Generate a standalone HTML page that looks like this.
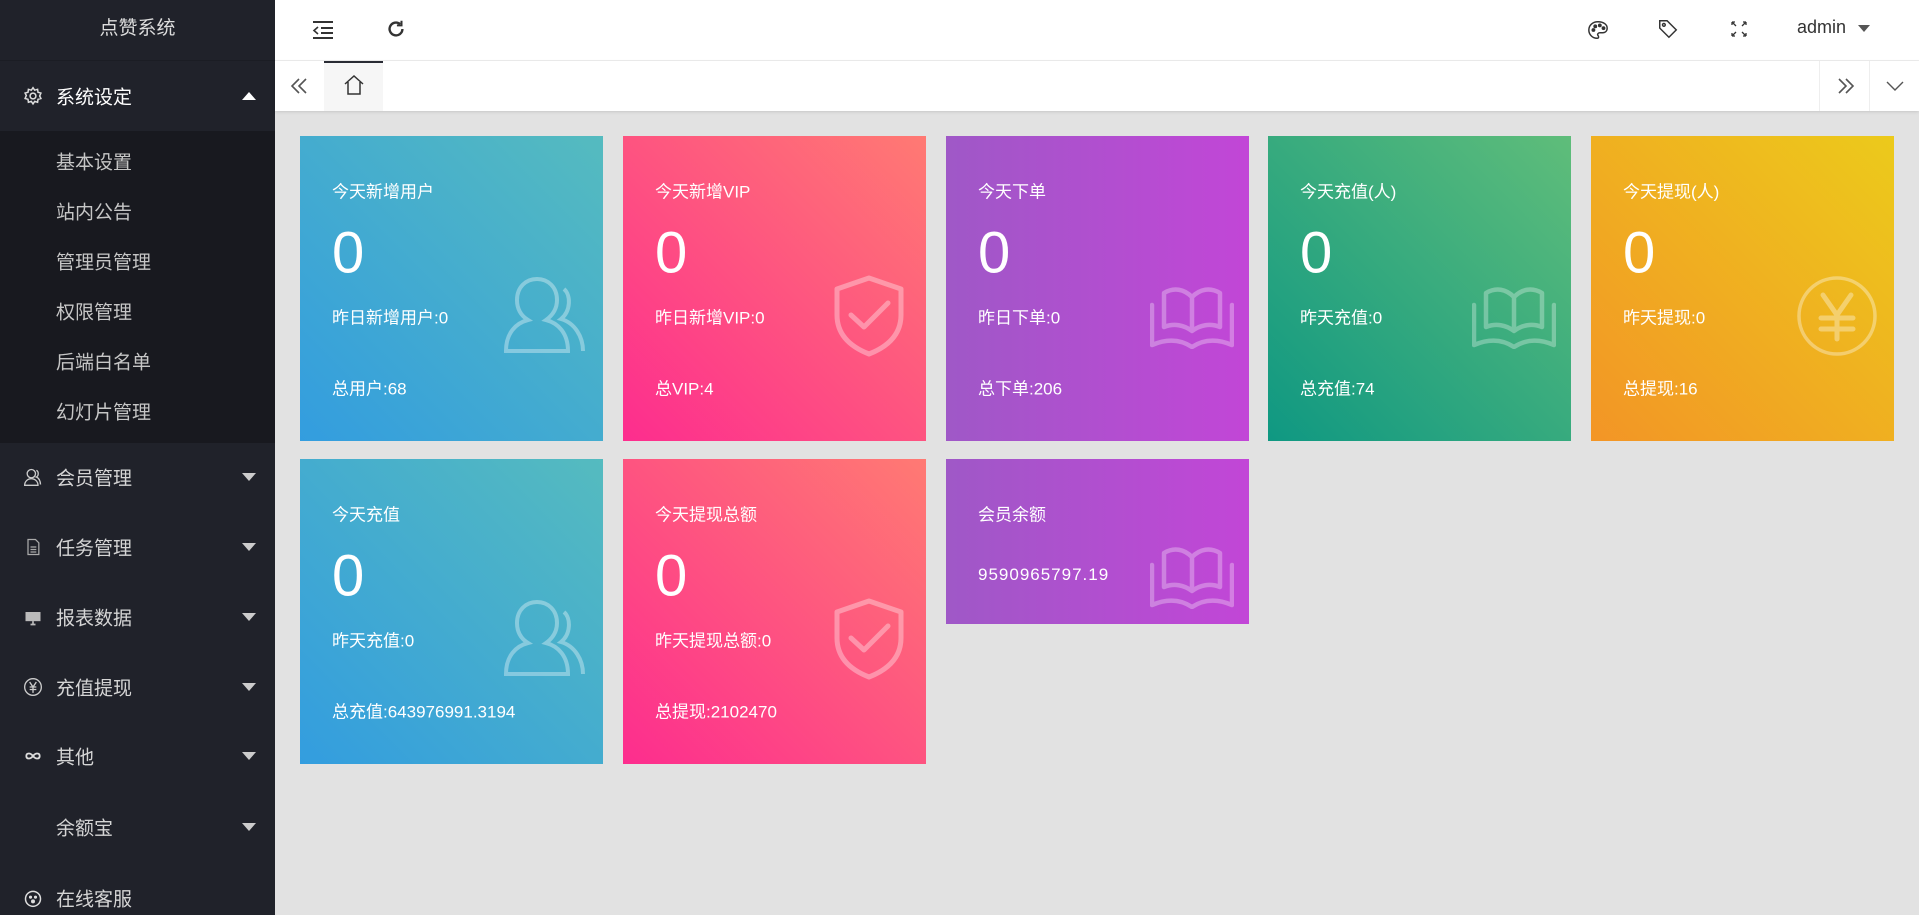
<!DOCTYPE html>
<html><head><meta charset="utf-8"><style>
*{margin:0;padding:0;box-sizing:border-box}
body{width:1919px;height:915px;overflow:hidden;background:#e2e2e2;font-family:"Liberation Sans","Noto Sans CJK SC",sans-serif;position:relative}
.side{position:absolute;left:0;top:0;width:275px;height:915px;background:#20222a;color:#c9c9c9}
.logo{height:61px;line-height:58px;text-align:center;font-size:19px;color:#ddd;border-bottom:1px solid #1b1d24}
.mi{position:absolute;left:0;width:275px;font-size:19px;color:#d5d5d5}
.mi .t{position:absolute;left:56px;transform:translateY(-50%)}
.mi .ic{position:absolute;left:23px;transform:translateY(-50%);width:20px;height:20px}
.mi .ar{position:absolute;left:242px;transform:translateY(-50%);width:0;height:0;border-left:7px solid transparent;border-right:7px solid transparent;border-top:8px solid #ccc}
.sub{position:absolute;left:0;top:131px;width:275px;height:312px;background:#18191f}
.sub div{position:absolute;left:56px;font-size:19px;color:#c6c6c6;transform:translateY(-50%)}
.top{position:absolute;left:275px;top:0;right:0;height:61px;background:#fff;border-bottom:1px solid #eee}
.tabs{position:absolute;left:275px;top:61px;right:0;height:50px;background:#fff;box-shadow:0 1px 3px rgba(0,0,0,.12)}
.card{position:absolute;width:303px;color:#fff;overflow:hidden}
.card .a{position:absolute;left:32px;transform:translateY(-50%);white-space:nowrap}
.h{font-size:17px}.n{font-size:58px}.s{font-size:17px}
.card svg.big{position:absolute}
</style></head><body>
<div class="side">
<div class="logo">点赞系统</div>
<div class="mi" style="top:96px"><svg class="ic" viewBox="0 0 24 24" fill="none" stroke="#ddd" stroke-width="1.8"><circle cx="12" cy="12" r="3.5"/><path d="M12 2l2 3 3.5-1 .5 3.5 3.5 1-1.5 3.5 1.5 3-3.5 1-.5 3.5-3.5-1-2 3-2-3-3.5 1-.5-3.5-3.5-1 1.5-3.5-1.5-3 3.5-1 .5-3.5 3.5 1z"/></svg><span class="t" style="color:#fff">系统设定</span><span class="ar" style="border-top:0;border-bottom:8px solid #fff"></span></div>
<div class="sub">
<div style="top:30px">基本设置</div><div style="top:80px">站内公告</div><div style="top:130px">管理员管理</div><div style="top:180px">权限管理</div><div style="top:230px">后端白名单</div><div style="top:280px">幻灯片管理</div>
</div>
<div class="mi" style="top:477px"><svg class="ic" viewBox="0 0 24 24" fill="none" stroke="#ccc" stroke-width="1.6"><circle cx="10" cy="8" r="5"/><path d="M2 22c0-5 4-8 8-8s8 3 8 8z M16 4c3 1 3 7 0 8 3 1 5 5 5 9"/></svg><span class="t">会员管理</span><span class="ar"></span></div>
<div class="mi" style="top:547px"><svg class="ic" viewBox="0 0 24 24" fill="none" stroke="#aaa" stroke-width="1.5"><path d="M6 3h9l4 4v14H6z M9 12h7M9 15h7M9 18h7"/></svg><span class="t">任务管理</span><span class="ar"></span></div>
<div class="mi" style="top:617px"><svg class="ic" viewBox="0 0 24 24"><rect x="3" y="6" width="18" height="11" fill="#bbb"/><path d="M12 17v4M9 21h6" stroke="#bbb" stroke-width="2"/></svg><span class="t">报表数据</span><span class="ar"></span></div>
<div class="mi" style="top:687px"><svg class="ic" viewBox="0 0 24 24" fill="none" stroke="#ccc" stroke-width="1.6"><circle cx="12" cy="12" r="10"/><path d="M8 6l4 6 4-6M12 12v7M8 12h8M8 15h8"/></svg><span class="t">充值提现</span><span class="ar"></span></div>
<div class="mi" style="top:756px"><svg class="ic" viewBox="0 0 24 24" fill="none" stroke="#ddd" stroke-width="2.2"><path d="M12 12c-3-4-8-4-8 0s5 4 8 0 8-4 8 0-5 4-8 0z"/></svg><span class="t">其他</span><span class="ar"></span></div>
<div class="mi" style="top:827px"><span class="t">余额宝</span><span class="ar"></span></div>
<div class="mi" style="top:898px"><svg class="ic" viewBox="0 0 24 24" fill="none" stroke="#ddd" stroke-width="1.8"><circle cx="12" cy="13" r="9"/><circle cx="9" cy="11" r="1" fill="#ddd"/><circle cx="15" cy="11" r="1" fill="#ddd"/><circle cx="12" cy="16" r="1.5" fill="#ddd"/></svg><span class="t">在线客服</span></div>
</div>

<div class="top">
<svg style="position:absolute;left:37px;top:19px" width="22" height="22" viewBox="0 0 22 22" fill="none" stroke="#333" stroke-width="2"><path d="M1 3h20M9 9h12M9 14h12M1 19h20"/><path d="M6 8l-4 3.5 4 3.5" stroke-width="1.6"/></svg>
<svg style="position:absolute;left:110px;top:18px" width="22" height="22" viewBox="0 0 24 24" fill="none" stroke="#333" stroke-width="2.6"><path d="M19 12a7 7 0 1 1-2.5-5.4"/><path d="M18 3v5h-5" stroke-width="2.2"/></svg>
<svg style="position:absolute;left:1312px;top:19px" width="22" height="22" viewBox="0 0 24 24" fill="none" stroke="#333" stroke-width="1.6"><path d="M12 3C6 3 2 7 2 12s4 9 9 9c2 0 2-2 1-3s0-3 2-3h3c3 0 5-2 5-5 0-4-4-7-10-7z"/><circle cx="7" cy="12" r="1.3" fill="#333"/><circle cx="9" cy="8" r="1.3" fill="#333"/><circle cx="14" cy="7" r="1.3" fill="#333"/><circle cx="18" cy="10" r="1.3" fill="#333"/></svg>
<svg style="position:absolute;left:1382px;top:18px" width="22" height="22" viewBox="0 0 24 24" fill="none" stroke="#333" stroke-width="1.6"><path d="M3 3h8l10 10-8 8L3 11z"/><circle cx="7.5" cy="7.5" r="1.5"/></svg>
<svg style="position:absolute;left:1455px;top:20px" width="18" height="18" viewBox="0 0 18 18" fill="none" stroke="#333" stroke-width="1.3"><path d="M2 2l4 4M2 2v3M2 2h3M16 2l-4 4M16 2v3M16 2h-3M2 16l4-4M2 16v-3M2 16h3M16 16l-4-4M16 16v-3M16 16h-3"/></svg>
<span style="position:absolute;left:1522px;top:17px;font-size:18px;color:#333">admin</span>
<span style="position:absolute;left:1583px;top:25px;border-left:6px solid transparent;border-right:6px solid transparent;border-top:7px solid #555"></span>
</div>

<div class="tabs">
<svg style="position:absolute;left:15px;top:16px" width="18" height="18" viewBox="0 0 18 18" fill="none" stroke="#555" stroke-width="1.6"><path d="M9 2L2 9l7 7M16 2L9 9l7 7"/></svg>
<div style="position:absolute;left:49px;top:0;width:59px;height:50px;background:#f6f6f6;border-top:2px solid #292b34"></div>
<svg style="position:absolute;left:68px;top:13px" width="22" height="22" viewBox="0 0 22 22" fill="none" stroke="#333" stroke-width="1.5"><path d="M2 10L11 2l9 8M5 8v12h12V8"/></svg>
<div style="position:absolute;right:99px;top:0;width:1px;height:50px;background:#eee"></div>
<div style="position:absolute;right:49px;top:0;width:1px;height:50px;background:#eee"></div>
<svg style="position:absolute;right:64px;top:16px" width="18" height="18" viewBox="0 0 18 18" fill="none" stroke="#555" stroke-width="1.6"><path d="M2 2l7 7-7 7M9 2l7 7-7 7"/></svg>
<svg style="position:absolute;right:15px;top:18px" width="18" height="14" viewBox="0 0 18 14" fill="none" stroke="#555" stroke-width="1.4"><path d="M1 3l8 8 8-8"/></svg>
</div>

<!-- row 1 -->
<div class="card" style="left:300px;top:136px;height:305px;background:linear-gradient(to top right,#339ddf,#55bbbf)">
<div class="a h" style="top:54px">今天新增用户</div><div class="a n" style="top:117px">0</div><div class="a s" style="top:180px">昨日新增用户:0</div><div class="a s" style="top:251px">总用户:68</div>
<svg class="big" style="left:204px;top:141px" width="84" height="80" viewBox="0 0 84 80" fill="none" stroke="rgba(255,255,255,.35)" stroke-width="4"><path d="M2 74c0-18 10-28 22-31-8-5-11-12-11-20C13 10 22 2 33 2s20 8 20 21c0 8-4 15-11 20 12 3 22 13 22 31z"/><path d="M60 12c7 6 7 22-3 30 14 4 22 18 22 32"/></svg>
</div>
<div class="card" style="left:623px;top:136px;height:305px;background:linear-gradient(to top right,#fd2d8e,#ff7a73)">
<div class="a h" style="top:54px">今天新增VIP</div><div class="a n" style="top:117px">0</div><div class="a s" style="top:180px">昨日新增VIP:0</div><div class="a s" style="top:251px">总VIP:4</div>
<svg class="big" style="left:210px;top:139px" width="72" height="82" viewBox="0 0 72 82" fill="none" stroke="rgba(255,255,255,.35)" stroke-width="5" stroke-linecap="round" stroke-linejoin="round"><path d="M36 3L4 14v26c0 20 14 32 32 39 18-7 32-19 32-39V14z"/><path d="M18 40l13 12 24-24"/></svg>
</div>
<div class="card" style="left:946px;top:136px;height:305px;background:linear-gradient(to right,#9f58c7,#c246d7)">
<div class="a h" style="top:54px">今天下单</div><div class="a n" style="top:117px">0</div><div class="a s" style="top:180px">昨日下单:0</div><div class="a s" style="top:251px">总下单:206</div>
<svg class="big" style="left:204px;top:149px" width="84" height="64" viewBox="0 0 84 64" fill="none" stroke="rgba(255,255,255,.3)" stroke-width="4.5" stroke-linecap="round" stroke-linejoin="round"><path d="M42 46C34 40 24 38 14 42V8c10-6 20-4 28 4 8-8 18-10 28-4v34c-10-4-20-2-28 4zM42 12v34"/><path d="M2 20v40c14-6 28-6 40 2 12-8 26-8 40-2V20"/></svg>
</div>
<div class="card" style="left:1268px;top:136px;height:305px;background:linear-gradient(to top right,#0f9882,#5fbd7a)">
<div class="a h" style="top:54px">今天充值(人)</div><div class="a n" style="top:117px">0</div><div class="a s" style="top:180px">昨天充值:0</div><div class="a s" style="top:251px">总充值:74</div>
<svg class="big" style="left:204px;top:149px" width="84" height="64" viewBox="0 0 84 64" fill="none" stroke="rgba(255,255,255,.3)" stroke-width="4.5" stroke-linecap="round" stroke-linejoin="round"><path d="M42 46C34 40 24 38 14 42V8c10-6 20-4 28 4 8-8 18-10 28-4v34c-10-4-20-2-28 4zM42 12v34"/><path d="M2 20v40c14-6 28-6 40 2 12-8 26-8 40-2V20"/></svg>
</div>
<div class="card" style="left:1591px;top:136px;height:305px;background:linear-gradient(to top right,#f39526,#ecca1b)">
<div class="a h" style="top:54px">今天提现(人)</div><div class="a n" style="top:117px">0</div><div class="a s" style="top:180px">昨天提现:0</div><div class="a s" style="top:251px">总提现:16</div>
<svg class="big" style="left:205px;top:139px" width="82" height="82" viewBox="0 0 82 82" fill="none" stroke="rgba(255,255,255,.35)" stroke-width="3.5" stroke-linecap="round"><circle cx="41" cy="41" r="38"/><path d="M27 20l14 20 14-20M41 40v24M25 43h32M25 54h32" stroke-width="5"/></svg>
</div>
<!-- row 2 -->
<div class="card" style="left:300px;top:459px;height:305px;background:linear-gradient(to top right,#339ddf,#55bbbf)">
<div class="a h" style="top:54px">今天充值</div><div class="a n" style="top:117px">0</div><div class="a s" style="top:180px">昨天充值:0</div><div class="a s" style="top:251px">总充值:643976991.3194</div>
<svg class="big" style="left:204px;top:141px" width="84" height="80" viewBox="0 0 84 80" fill="none" stroke="rgba(255,255,255,.35)" stroke-width="4"><path d="M2 74c0-18 10-28 22-31-8-5-11-12-11-20C13 10 22 2 33 2s20 8 20 21c0 8-4 15-11 20 12 3 22 13 22 31z"/><path d="M60 12c7 6 7 22-3 30 14 4 22 18 22 32"/></svg>
</div>
<div class="card" style="left:623px;top:459px;height:305px;background:linear-gradient(to top right,#fd2d8e,#ff7a73)">
<div class="a h" style="top:54px">今天提现总额</div><div class="a n" style="top:117px">0</div><div class="a s" style="top:180px">昨天提现总额:0</div><div class="a s" style="top:251px">总提现:2102470</div>
<svg class="big" style="left:210px;top:139px" width="72" height="82" viewBox="0 0 72 82" fill="none" stroke="rgba(255,255,255,.35)" stroke-width="5" stroke-linecap="round" stroke-linejoin="round"><path d="M36 3L4 14v26c0 20 14 32 32 39 18-7 32-19 32-39V14z"/><path d="M18 40l13 12 24-24"/></svg>
</div>
<div class="card" style="left:946px;top:459px;height:165px;background:linear-gradient(to right,#9f58c7,#c246d7)">
<div class="a h" style="top:54px">会员余额</div><div class="a s" style="top:116px;letter-spacing:1px">9590965797.19</div>
<svg class="big" style="left:204px;top:86px" width="84" height="64" viewBox="0 0 84 64" fill="none" stroke="rgba(255,255,255,.3)" stroke-width="4.5" stroke-linecap="round" stroke-linejoin="round"><path d="M42 46C34 40 24 38 14 42V8c10-6 20-4 28 4 8-8 18-10 28-4v34c-10-4-20-2-28 4zM42 12v34"/><path d="M2 20v40c14-6 28-6 40 2 12-8 26-8 40-2V20"/></svg>
</div>
</body></html>
